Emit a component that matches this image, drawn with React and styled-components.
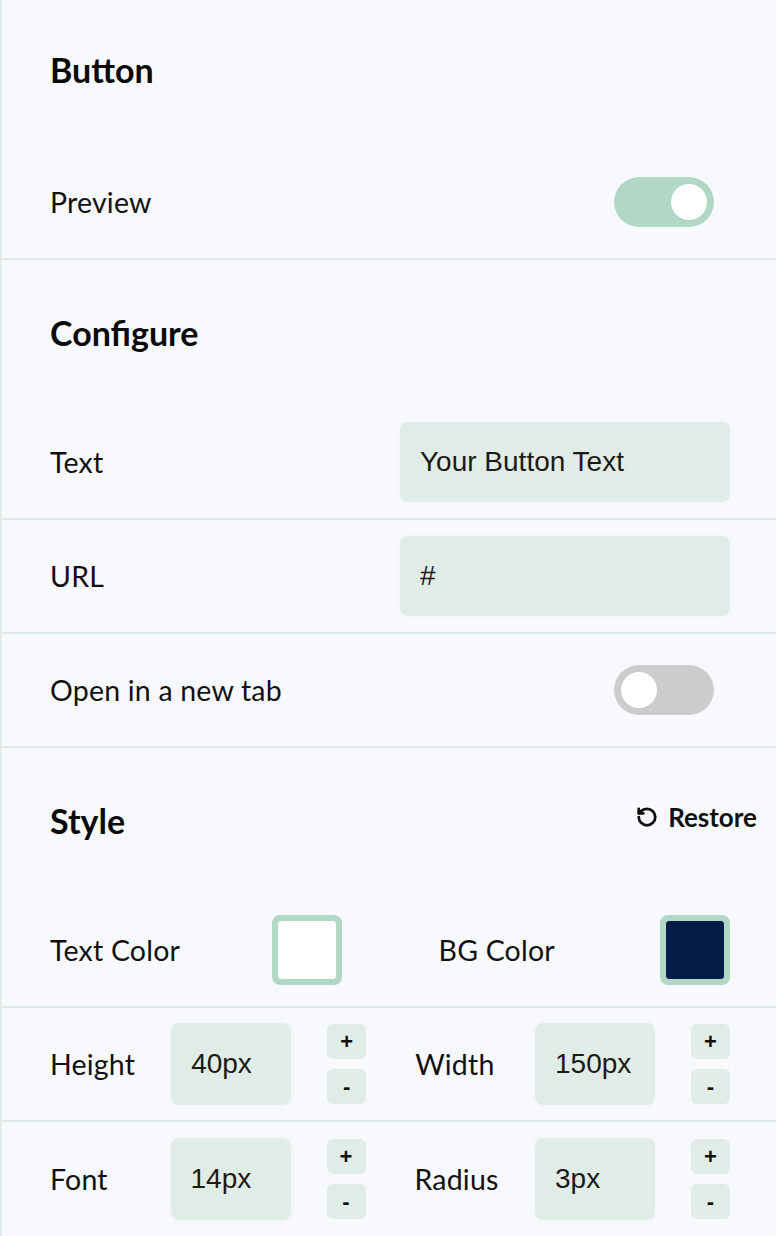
import React, { useState } from "react";
import styled, { createGlobalStyle } from "styled-components";
import { RotateCcw } from "lucide-react";

const Global = createGlobalStyle`
  html, body { margin: 0; padding: 0; background: #f8f9fc; }
  * { box-sizing: border-box; }
`;

const Panel = styled.div`
  width: 776px;
  min-height: 1236px;
  background: #f8f9fc;
  border-left: 2px solid #e0ede6;
  font-family: Lato, "Noto Sans", sans-serif;
  color: #111;
`;

const HeadingBlock = styled.div`
  height: 146px;
  display: flex;
  align-items: center;
  justify-content: space-between;
  padding: 0 19px ${(p) => (p.$first ? 6 : 0)}px 48px;
`;

const Heading = styled.h2`
  margin: 0;
  font-size: 34px;
  font-weight: 700;
  color: #0a0a0a;
  line-height: 1;
`;

const RestoreButton = styled.button`
  display: flex;
  align-items: center;
  gap: 10px;
  border: none;
  background: transparent;
  padding: 0;
  margin-bottom: 8px;
  font-family: Lato, sans-serif;
  font-weight: 700;
  font-size: 26px;
  color: #111;
  cursor: pointer;
`;

const Row = styled.div`
  height: 114px;
  display: flex;
  align-items: center;
  justify-content: space-between;
  padding: 0 46px 0 48px;
  border-bottom: ${(p) => (p.$last ? "none" : "2px solid #e0ede6")};
`;

const Label = styled.span`
  font-size: 28.5px;
  font-weight: 400;
  color: #111;
  letter-spacing: 0.2px;
`;

const Track = styled.button`
  width: 100px;
  height: 50px;
  margin-right: 16px;
  border-radius: 25px;
  border: none;
  padding: 0 7px;
  display: flex;
  align-items: center;
  justify-content: ${(p) => (p.$on ? "flex-end" : "flex-start")};
  background: ${(p) => (p.$on ? "#b1d8c4" : "#cccccc")};
  cursor: pointer;
`;

const Knob = styled.span`
  width: 36px;
  height: 36px;
  border-radius: 50%;
  background: #fff;
`;

const TextInput = styled.input`
  width: 330px;
  height: 80px;
  border: none;
  border-radius: 8px;
  background: #e0ede6;
  padding: 0 20px;
  font-family: "Liberation Sans", Arial, sans-serif;
  font-size: 28px;
  color: #1d1915;
  outline: none;
  box-shadow: 0 0 6px rgba(0, 0, 0, 0.03);
`;

const TwoCols = styled.div`
  height: 114px;
  display: grid;
  grid-template-columns: ${(p) => p.$cols};
  column-gap: ${(p) => p.$gap}px;
  align-items: center;
  padding: 0 46px 0 48px;
  border-bottom: ${(p) => (p.$last ? "none" : "2px solid #e0ede6")};
`;

const ColorCell = styled.div`
  display: flex;
  align-items: center;
  justify-content: space-between;
`;

const Swatch = styled.div`
  width: 70px;
  height: 70px;
  border: 6px solid #b1d8c4;
  border-radius: 8px;
  background: #b1d8c4;
  overflow: hidden;
`;

const SwatchInner = styled.div`
  width: 100%;
  height: 100%;
  border-radius: 3px;
  background: ${(p) => p.$color};
`;

const NumberCell = styled.div`
  display: grid;
  grid-template-columns: 1fr 120px 39px;
  column-gap: 36px;
  align-items: center;
`;

const NumberInput = styled.input`
  width: 120px;
  height: 82px;
  border: none;
  border-radius: 8px;
  background: #e0ede6;
  padding: 0 20px;
  font-family: "Liberation Sans", Arial, sans-serif;
  font-size: 28px;
  color: #1d1915;
  outline: none;
  box-shadow: 0 0 6px rgba(0, 0, 0, 0.03);
`;

const Stepper = styled.div`
  display: flex;
  flex-direction: column;
  gap: 10px;
`;

const StepButton = styled.button`
  width: 39px;
  height: 35px;
  border: none;
  border-radius: 6px;
  background: #e0ede6;
  padding: 0;
  font-family: "Liberation Sans", Arial, sans-serif;
  font-weight: 700;
  font-size: 22px;
  line-height: 1;
  color: #111;
  display: flex;
  align-items: center;
  justify-content: center;
  cursor: pointer;
`;

function Toggle({ initial }) {
  const [on, setOn] = useState(initial);
  return (
    <Track $on={on} onClick={() => setOn(!on)}>
      <Knob />
    </Track>
  );
}

function NumberField({ label, value }) {
  return (
    <NumberCell>
      <Label>{label}</Label>
      <NumberInput defaultValue={value} />
      <Stepper>
        <StepButton>+</StepButton>
        <StepButton>-</StepButton>
      </Stepper>
    </NumberCell>
  );
}

export default function App() {
  return (
    <>
      <Global />
      <Panel>
        <HeadingBlock $first>
          <Heading>Button</Heading>
        </HeadingBlock>
        <Row>
          <Label>Preview</Label>
          <Toggle initial={true} />
        </Row>

        <HeadingBlock>
          <Heading>Configure</Heading>
        </HeadingBlock>
        <Row>
          <Label>Text</Label>
          <TextInput defaultValue="Your Button Text" />
        </Row>
        <Row>
          <Label>URL</Label>
          <TextInput defaultValue="#" />
        </Row>
        <Row>
          <Label>Open in a new tab</Label>
          <Toggle initial={false} />
        </Row>

        <HeadingBlock>
          <Heading>Style</Heading>
          <RestoreButton>
            <RotateCcw size={22} strokeWidth={3} />
            Restore
          </RestoreButton>
        </HeadingBlock>
        <TwoCols $cols="1fr 1fr" $gap={97}>
          <ColorCell>
            <Label>Text Color</Label>
            <Swatch>
              <SwatchInner $color="#ffffff" />
            </Swatch>
          </ColorCell>
          <ColorCell>
            <Label>BG Color</Label>
            <Swatch>
              <SwatchInner $color="#061c48" />
            </Swatch>
          </ColorCell>
        </TwoCols>
        <TwoCols $cols="1fr 1fr" $gap={49}>
          <NumberField label="Height" value="40px" />
          <NumberField label="Width" value="150px" />
        </TwoCols>
        <TwoCols $cols="1fr 1fr" $gap={49} $last>
          <NumberField label="Font" value="14px" />
          <NumberField label="Radius" value="3px" />
        </TwoCols>
      </Panel>
    </>
  );
}
